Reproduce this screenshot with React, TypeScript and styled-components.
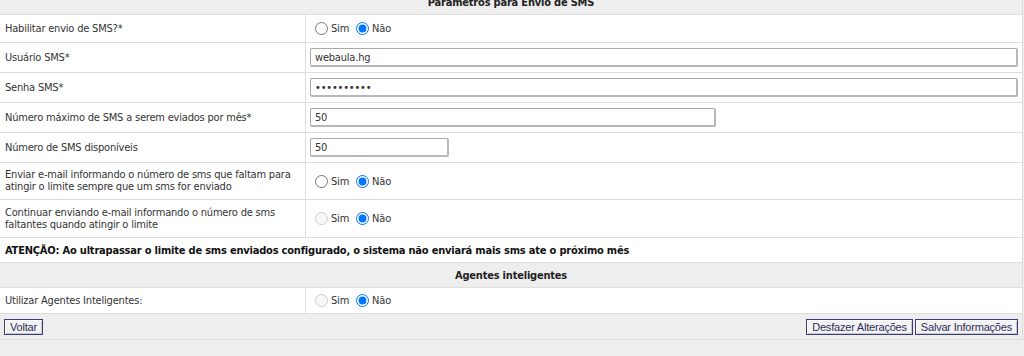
import styled, { createGlobalStyle } from 'styled-components';

const GlobalStyle = createGlobalStyle`
  html, body {
    margin: 0;
    padding: 0;
    background: #eeeeee;
    overflow: hidden;
  }
  body {
    font-family: 'DejaVu Sans Condensed', 'DejaVu Sans', sans-serif;
    font-size: 11px;
    letter-spacing: -0.2px;
    color: #333333;
  }
`;

type YesNo = 'sim' | 'nao';

interface Field {
  label: string;
  height: number;
  kind: 'radio' | 'text' | 'password';
  value?: string;
  width?: string;
  checked?: YesNo;
  simDisabled?: boolean;
}

const smsFields: Field[] = [
  { label: 'Habilitar envio de SMS?*', height: 27, kind: 'radio', checked: 'nao' },
  { label: 'Usuário SMS*', height: 29, kind: 'text', value: 'webaula.hg' },
  { label: 'Senha SMS*', height: 29, kind: 'password', value: 'webaula123' },
  { label: 'Número máximo de SMS a serem eviados por mês*', height: 29, kind: 'text', value: '50', width: '406px' },
  { label: 'Número de SMS disponíveis', height: 29, kind: 'text', value: '50', width: '139px' },
  {
    label: 'Enviar e-mail informando o número de sms que faltam para atingir o limite sempre que um sms for enviado',
    height: 36,
    kind: 'radio',
    checked: 'nao',
  },
  {
    label: 'Continuar enviando e-mail informando o número de sms faltantes quando atingir o limite',
    height: 37,
    kind: 'radio',
    checked: 'nao',
    simDisabled: true,
  },
];

function RadioPair({ name, checked, simDisabled }: { name: string; checked?: YesNo; simDisabled?: boolean }) {
  return (
    <Options>
      <Option>
        <Radio type="radio" name={name} defaultChecked={checked === 'sim'} disabled={simDisabled} />
        Sim
      </Option>
      <Option>
        <Radio type="radio" name={name} defaultChecked={checked === 'nao'} />
        Não
      </Option>
    </Options>
  );
}

function App() {
  return (
    <>
      <GlobalStyle />
      <Page>
        <Table>
          <SectionTitle $h={24}>Parametros para Envio de SMS</SectionTitle>
          {smsFields.map((field, i) => (
            <Row key={i} $h={field.height}>
              <Label>{field.label}</Label>
              <Value>
                {field.kind === 'radio' ? (
                  <RadioPair name={`sms${i}`} checked={field.checked} simDisabled={field.simDisabled} />
                ) : (
                  <TextInput
                    type={field.kind}
                    defaultValue={field.value}
                    $width={field.width}
                  />
                )}
              </Value>
            </Row>
          ))}
          <Warning $h={24}>
            ATENÇÃO: Ao ultrapassar o limite de sms enviados configurado, o sistema não enviará mais sms ate o próximo mês
          </Warning>
          <SectionTitle $h={24}>Agentes inteligentes</SectionTitle>
          <Row $h={25}>
            <Label>Utilizar Agentes Inteligentes:</Label>
            <Value>
              <RadioPair name="agentes" checked="nao" simDisabled />
            </Value>
          </Row>
          <Actions>
            <Button>Voltar</Button>
            <RightButtons>
              <Button>Desfazer Alterações</Button>
              <Button>Salvar Informações</Button>
            </RightButtons>
          </Actions>
        </Table>
      </Page>
    </>
  );
}

export default App;

const Page = styled.div`
  margin-top: -10px;
  width: 1023px;
`;

const Table = styled.div`
  display: flex;
  flex-direction: column;
  border-right: 1px solid #dddddd;
`;

const SectionTitle = styled.div<{ $h: number }>`
  height: ${({ $h }) => $h}px;
  display: flex;
  align-items: center;
  justify-content: center;
  background: #eeeeee;
  border-bottom: 1px solid #dddddd;
  font-weight: bold;
  font-size: 11px;
  color: #222222;
`;

const Row = styled.div<{ $h: number }>`
  display: grid;
  grid-template-columns: 306px 1fr;
  min-height: ${({ $h }) => $h}px;
  background: #ffffff;
  border-bottom: 1px solid #dddddd;
`;

const Label = styled.div`
  display: flex;
  align-items: center;
  padding: 0 8px 0 5px;
  border-right: 1px solid #dddddd;
  line-height: 12px;
`;

const Value = styled.div`
  display: flex;
  align-items: center;
  padding: 0 4px;
`;

const Options = styled.div`
  display: flex;
  align-items: center;
`;

const Option = styled.label`
  display: flex;
  align-items: center;
  margin-right: 2px;
`;

const Radio = styled.input`
  width: 13px;
  height: 13px;
  margin: 0 3px 0 5px;
`;

const TextInput = styled.input<{ $width?: string }>`
  box-sizing: border-box;
  width: ${({ $width }) => $width || '100%'};
  height: 19px;
  padding: 0 4px;
  font-family: 'DejaVu Sans Condensed', 'DejaVu Sans', sans-serif;
  font-size: 11px;
  letter-spacing: -0.2px;
  color: #333333;
  background: #ffffff;
  border: 1px solid #a9a9a9;
  border-right: 2px solid #b8b8b8;
  border-bottom: 2px solid #b8b8b8;
  border-radius: 2px;
  outline: none;
`;

const Warning = styled.div<{ $h: number }>`
  height: ${({ $h }) => $h}px;
  display: flex;
  align-items: center;
  padding-left: 5px;
  background: #ffffff;
  border-bottom: 1px solid #dddddd;
  font-weight: bold;
  color: #111111;
`;

const Actions = styled.div`
  display: flex;
  justify-content: space-between;
  align-items: center;
  height: 25px;
  padding: 0 4px;
  border-bottom: 1px solid #dddddd;
  background: #eeeeee;
`;

const RightButtons = styled.div`
  display: flex;
  gap: 2px;
`;

const Button = styled.button`
  height: 16px;
  padding: 0 5px;
  font-family: 'Liberation Sans', Arial, sans-serif;
  font-size: 11px;
  letter-spacing: -0.2px;
  line-height: 12px;
  color: #2e2e5c;
  background: #f2f2f2;
  border: 1px solid #3c3c78;
  box-shadow: inset 1px 1px 0 #ffffff, inset -1px -1px 0 #c8c8c8;
  border-radius: 0;
  cursor: pointer;
`;
